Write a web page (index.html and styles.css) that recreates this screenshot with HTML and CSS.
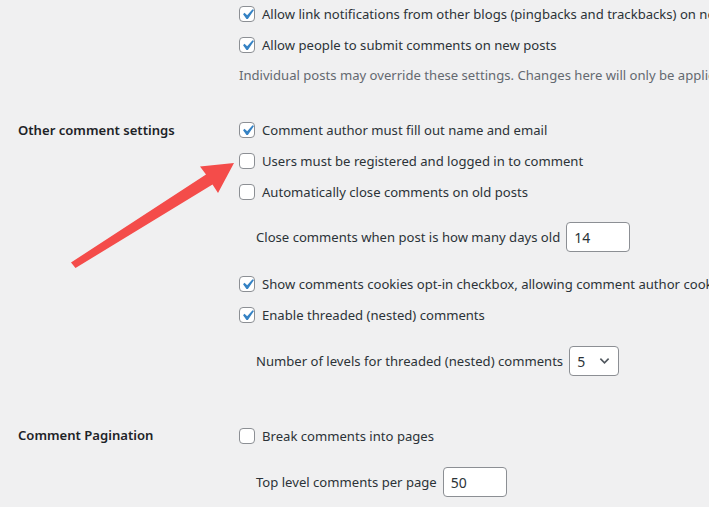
FILE: index.html
```html
<!DOCTYPE html>
<html>
<head>
<meta charset="utf-8">
<link rel="stylesheet" href="styles.css">
</head>
<body>
<div class="page">
  <section class="sec sec1">
    <div class="th"></div>
    <div class="td">
      <label class="opt"><span class="cb on"><svg viewBox="0 0 20 20"><path d="M14.83 4.89l1.34.94-5.81 8.38H9.02L5.78 9.67l1.34-1.25 2.57 2.4z"/></svg></span><span>Allow link notifications from other blogs (pingbacks and trackbacks) on new posts</span></label>
      <label class="opt opt-last"><span class="cb on"><svg viewBox="0 0 20 20"><path d="M14.83 4.89l1.34.94-5.81 8.38H9.02L5.78 9.67l1.34-1.25 2.57 2.4z"/></svg></span><span>Allow people to submit comments on new posts</span></label>
      <p class="desc">Individual posts may override these settings. Changes here will only be applied to new posts.</p>
    </div>
  </section>

  <section class="sec sec2">
    <div class="th">Other comment settings</div>
    <div class="td">
      <label class="opt"><span class="cb on"><svg viewBox="0 0 20 20"><path d="M14.83 4.89l1.34.94-5.81 8.38H9.02L5.78 9.67l1.34-1.25 2.57 2.4z"/></svg></span><span>Comment author must fill out name and email</span></label>
      <label class="opt"><span class="cb"></span><span>Users must be registered and logged in to comment</span></label>
      <label class="opt opt-flush"><span class="cb"></span><span>Automatically close comments on old posts</span></label>
      <div class="sub sub-a"><span>Close comments when post is how many days old</span><span class="inp">14</span></div>
      <label class="opt sub-next"><span class="cb on"><svg viewBox="0 0 20 20"><path d="M14.83 4.89l1.34.94-5.81 8.38H9.02L5.78 9.67l1.34-1.25 2.57 2.4z"/></svg></span><span>Show comments cookies opt-in checkbox, allowing comment author cookies to be set</span></label>
      <label class="opt"><span class="cb on"><svg viewBox="0 0 20 20"><path d="M14.83 4.89l1.34.94-5.81 8.38H9.02L5.78 9.67l1.34-1.25 2.57 2.4z"/></svg></span><span>Enable threaded (nested) comments</span></label>
      <div class="sub sub-b"><span>Number of levels for threaded (nested) comments</span><span class="sel">5<svg viewBox="0 0 12 8"><path d="M1.5 1.5l4.5 4.5 4.5-4.5"/></svg></span></div>
    </div>
  </section>

  <section class="sec sec3">
    <div class="th">Comment Pagination</div>
    <div class="td">
      <label class="opt"><span class="cb"></span><span>Break comments into pages</span></label>
      <div class="sub sub-b"><span>Top level comments per page</span><span class="inp">50</span></div>
    </div>
  </section>

  <svg class="arrow" viewBox="0 0 709 507" width="709" height="507">
    <polygon points="234,163 218,193 212.5,184.5 75.5,268 71,262.5 206,174.5 200,166.5"/>
  </svg>
</div>
</body>
</html>
```

FILE: styles.css
```css
html, body {
  margin: 0;
  padding: 0;
  background: #f0f0f1;
}
body {
  width: 709px;
  height: 507px;
  overflow: hidden;
  font-family: "Noto Sans", "Open Sans", sans-serif;
  font-size: 13.1px;
  color: #2c3338;
}
.page {
  position: relative;
  padding-left: 18px;
  width: 709px;
  height: 507px;
  box-sizing: border-box;
  overflow: hidden;
}
.sec {
  display: flex;
  align-items: flex-start;
}
.th {
  flex: none;
  width: 221px;
  font-weight: 600;
  color: #1d2327;
  line-height: 24px;
  white-space: nowrap;
}
.td {
  flex: none;
  display: flex;
  flex-direction: column;
  white-space: nowrap;
}
.sec1 { padding-top: 2px; }
.sec2 { padding-top: 33px; }
.sec3 { padding-top: 48px; }
.sec3 .th { line-height: 22px; }

.opt {
  display: flex;
  align-items: center;
  gap: 7px;
  height: 24px;
  margin-bottom: 7px;
}
.opt-last { margin-bottom: 8px; }
.opt-flush { margin-bottom: 0; }
.cb {
  flex: none;
  width: 16px;
  height: 16px;
  box-sizing: border-box;
  border: 1px solid #8c8f94;
  border-radius: 4px;
  background: #fff;
  position: relative;
}
.cb svg {
  position: absolute;
  left: -3px;
  top: -3px;
  width: 21px;
  height: 21px;
  fill: #3582c4;
}
.desc {
  margin: 0;
  line-height: 20px;
  color: #646970;
}
.sub {
  display: flex;
  align-items: center;
  gap: 6px;
  padding-left: 17px;
  height: 30px;
}
.sub-a { margin-top: 18px; }
.sub-next { margin-top: 20px; }
.sub-b { margin-top: 12px; }
.inp, .sel {
  display: flex;
  align-items: center;
  box-sizing: border-box;
  height: 30px;
  background: #fff;
  border: 1px solid #8c8f94;
  border-radius: 4px;
  color: #2c3338;
  font-size: 14px;
}
.inp {
  width: 64px;
  padding-left: 7px;
}
.sel {
  width: 50px;
  padding-left: 7px;
  justify-content: space-between;
  padding-right: 8px;
}
.sel svg {
  width: 11px;
  height: 8px;
  fill: none;
  stroke: #50575e;
  stroke-width: 1.8;
}
.arrow {
  position: absolute;
  left: 0;
  top: 0;
  pointer-events: none;
}
.arrow polygon {
  fill: #f44c4a;
}
```
